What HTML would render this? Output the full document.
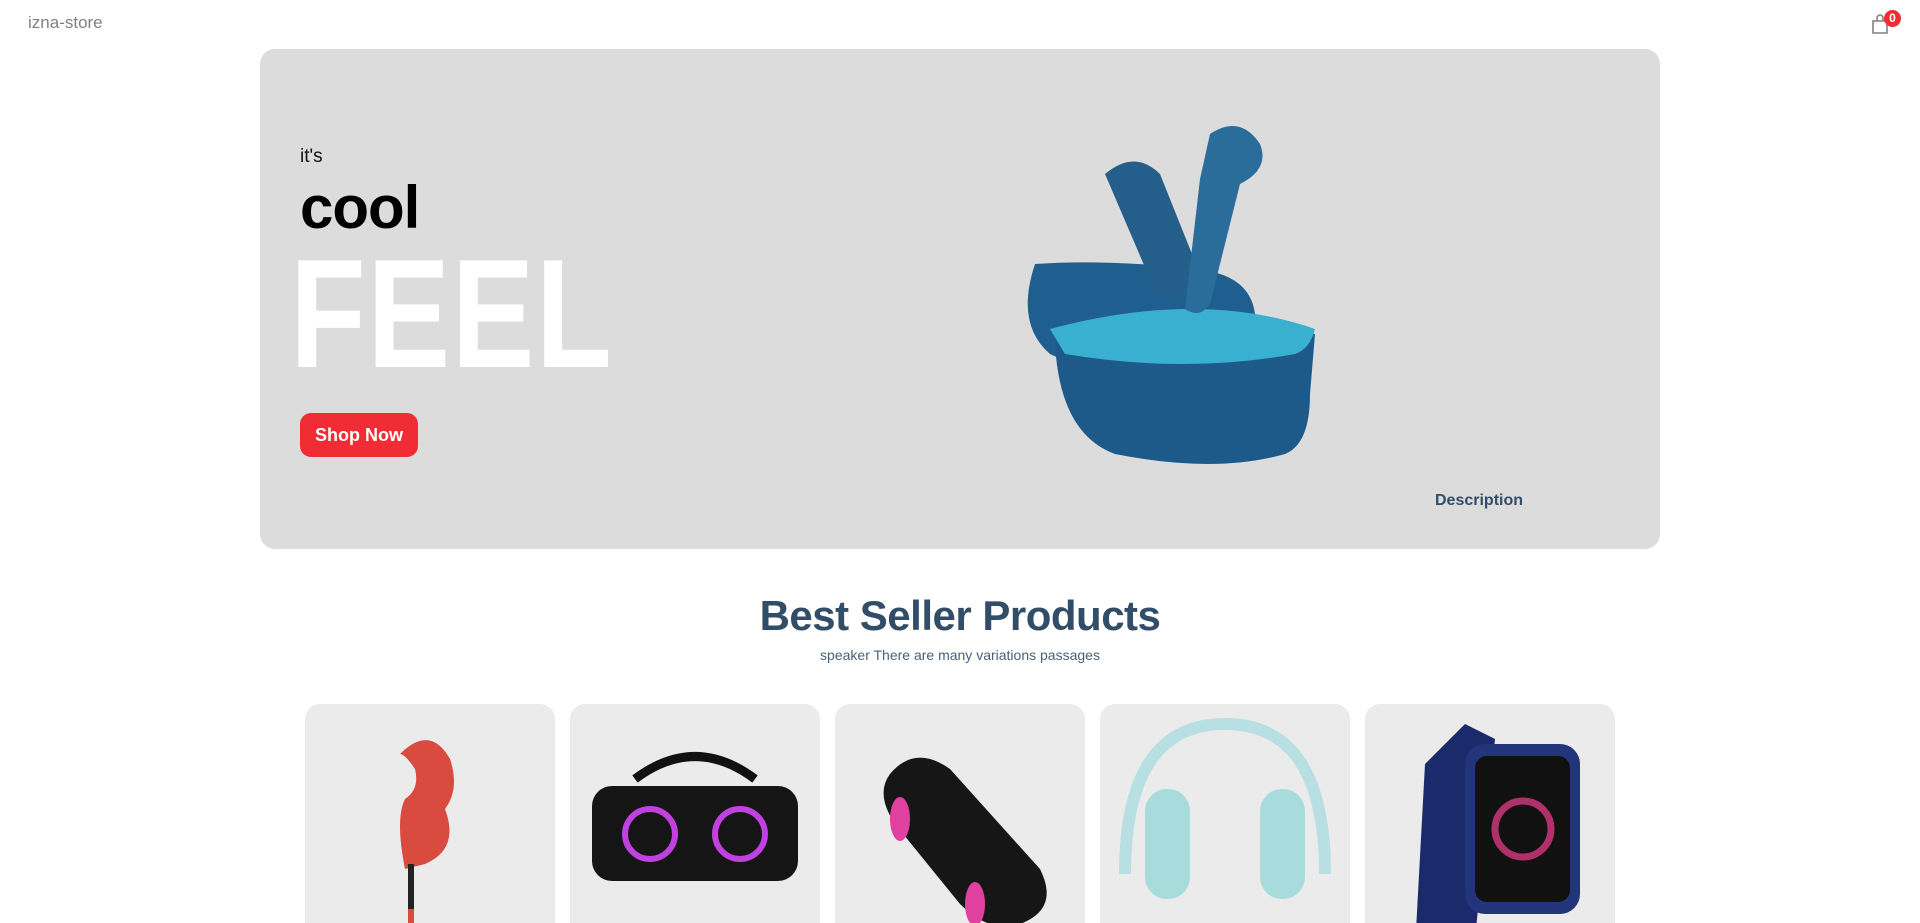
<!DOCTYPE html>
<html style="width:1920px;height:923px;overflow:hidden"><head><meta charset="utf-8"><style>
*{margin:0;padding:0;box-sizing:border-box}
body{width:1920px;height:923px;overflow:hidden;background:#fff;font-family:"Liberation Sans",sans-serif;position:relative}
.abs{position:absolute}
.logo{left:28px;top:13px;font-size:17px;color:#808080}
.cart{left:1869px;top:13px}
.badge{left:1884px;top:10px;width:17px;height:17px;border-radius:50%;background:#f02d34;color:#fff;font-size:12px;font-weight:bold;text-align:center;line-height:17px}
.banner{left:260px;top:49px;width:1400px;height:500px;background:#dcdcdc;border-radius:15px;overflow:hidden}
.its{left:40px;top:97px;font-size:19px;color:#111}
.cool{left:40px;top:124px;font-size:60px;font-weight:bold;color:#000;letter-spacing:-1px}
.feel{left:30px;top:187px;font-size:155px;font-weight:bold;color:#fff;transform:scaleX(0.8);transform-origin:left top;letter-spacing:2px;line-height:1}
.btn{left:40px;top:364px;width:118px;height:44px;border-radius:11px;background:#f02d34;color:#fff;font-size:18px;font-weight:bold;text-align:center;line-height:44px}
.desc{left:1175px;top:443px;font-size:16px;font-weight:bold;color:#324d67}
.h2{left:0;width:1920px;top:592px;text-align:center;font-size:42px;font-weight:bold;color:#324d67;letter-spacing:-0.5px}
.sub{left:0;width:1920px;top:647px;text-align:center;font-size:14px;color:#4a6078}
.card{top:704px;width:250px;height:260px;background:#ebebeb;border-radius:15px;overflow:hidden}
</style></head><body>
<div class="abs logo">izna-store</div>
<svg class="abs cart" width="22" height="22" viewBox="0 0 22 22"><path d="M4 8h14v12H4z M8 8V5a3 3 0 0 1 6 0v3" fill="none" stroke="#808080" stroke-width="1.6"/></svg>
<div class="abs badge">0</div>

<div class="abs banner">
 <div class="abs its">it's</div>
 <div class="abs cool">cool</div>
 <div class="abs feel">FEEL</div>
 <div class="abs btn">Shop Now</div>
 <svg class="abs" style="left:735px;top:65px" width="340" height="380" viewBox="0 0 340 380">
  <path d="M40 150 q-20 60 15 90 q60 30 150 20 q60-5 55-60 q-5-40-60-45 q-90-10-160-5z" fill="#1f5f8f"/>
  <path d="M60 230 q5 90 60 110 q100 20 170 0 q25-10 25-60 l5-60 q-120-20-260 10z" fill="#1d5a8a"/>
  <path d="M55 215 q150-40 265 0 q-5 20-20 25 q-110 20-230 0z" fill="#3ab0d0"/>
  <path d="M110 60 q30-25 55 0 l40 100 q5 20-20 25 q-25 5-30-20z" fill="#245f8c"/>
  <path d="M215 20 q30-20 50 10 q10 25-20 40 l-30 120 q-10 15-25 5 l15-130z" fill="#2a6d9b"/>
 </svg>
 <div class="abs desc">Description</div>
</div>

<div class="abs h2">Best Seller Products</div>
<div class="abs sub">speaker There are many variations passages</div>

<div class="abs card" style="left:305px">
 <svg width="250" height="260"><path d="M95 50 q30-30 50 5 q10 30-5 50 q15 40-20 55 l-20 5 q-10-50 0-70 q15-10 10-30 q-10-15-15-15z" fill="#d84b3e"/><rect x="103" y="160" width="6" height="100" fill="#222"/><rect x="103" y="205" width="6" height="60" fill="#d84b3e"/></svg>
</div>
<div class="abs card" style="left:570px">
 <svg width="250" height="260"><path d="M65 75 q60-45 120 0" fill="none" stroke="#111" stroke-width="9"/><rect x="22" y="82" width="206" height="95" rx="20" fill="#151515"/><circle cx="80" cy="130" r="25" fill="none" stroke="#c040e0" stroke-width="6"/><circle cx="170" cy="130" r="25" fill="none" stroke="#c040e0" stroke-width="6"/></svg>
</div>
<div class="abs card" style="left:835px">
 <svg width="250" height="260"><path d="M55 70 q25-30 60-5 l90 100 q20 40-20 55 q-30 10-60-20 l-65-80 q-20-30-5-50z" fill="#161616"/><ellipse cx="65" cy="115" rx="10" ry="22" fill="#e040a0"/><ellipse cx="140" cy="200" rx="10" ry="22" fill="#e040a0"/></svg>
</div>
<div class="abs card" style="left:1100px">
 <svg width="250" height="260"><path d="M25 170 q0-150 100-150 q100 0 100 150" fill="none" stroke="#b8e0e2" stroke-width="12"/><rect x="45" y="85" width="45" height="110" rx="22" fill="#a8dcdc"/><rect x="160" y="85" width="45" height="110" rx="22" fill="#a8dcdc"/></svg>
</div>
<div class="abs card" style="left:1365px">
 <svg width="250" height="260"><path d="M60 60 l40-40 l30 15 l-20 200 l-60 10z" fill="#1b2a6a"/><rect x="100" y="40" width="115" height="170" rx="20" fill="#22347a"/><rect x="110" y="52" width="95" height="146" rx="12" fill="#111"/><circle cx="158" cy="125" r="28" fill="none" stroke="#b0306a" stroke-width="7"/></svg>
</div>
</body></html>
